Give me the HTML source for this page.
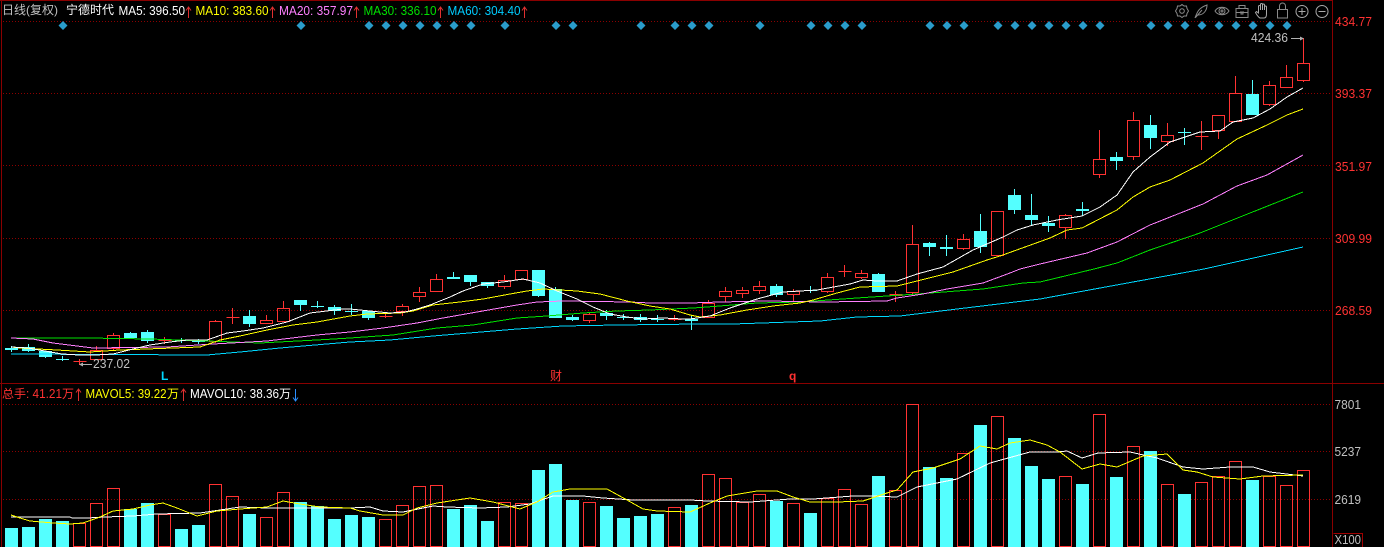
<!DOCTYPE html>
<html lang="zh">
<head>
<meta charset="utf-8">
<title>宁德时代</title>
<style>
html,body{margin:0;padding:0;background:#000;width:1384px;height:547px;overflow:hidden}
svg{display:block;position:absolute;left:0;top:0}
text{font-family:"Liberation Sans","Noto Sans CJK SC",sans-serif;font-size:12px}
text.n{font-size:13px}
.c polyline,.c path,.c line{shape-rendering:crispEdges;fill:none}
.g{stroke:#8c0000;stroke-width:1;stroke-dasharray:1 2}
</style>
</head>
<body>
<svg width="1384" height="547" viewBox="0 0 1384 547" xmlns="http://www.w3.org/2000/svg">
<rect width="1384" height="547" fill="#000"/>
<g class="c">
<path d="M0 .5H1332.5M1.5 0V547M1332.5 0V547M0 383.5H1384" stroke="#8a0000"/>
<path class="g" d="M3 21.5H1332M3 93.5H1332M3 165.5H1332M3 238.5H1332M3 310.5H1332M3 404.5H1332M3 451.5H1332M3 499.5H1332"/>
</g>

<!-- diamonds -->
<g fill="#2a9ccb">
<path d="M63 21l4.500 4.500-4.500 4.500-4.500-4.500zM301 21l4.500 4.500-4.500 4.500-4.500-4.500zM369 21l4.500 4.500-4.500 4.500-4.500-4.500zM386 21l4.500 4.500-4.500 4.500-4.500-4.500zM403 21l4.500 4.500-4.500 4.500-4.500-4.500zM420 21l4.500 4.500-4.500 4.500-4.500-4.500zM437 21l4.500 4.500-4.500 4.500-4.500-4.500zM454 21l4.500 4.500-4.500 4.500-4.500-4.500zM471 21l4.500 4.500-4.500 4.500-4.500-4.500zM505 21l4.500 4.500-4.500 4.500-4.500-4.500zM556 21l4.500 4.500-4.500 4.500-4.500-4.500zM573 21l4.500 4.500-4.500 4.500-4.500-4.500zM641 21l4.500 4.500-4.500 4.500-4.500-4.500zM675 21l4.500 4.500-4.500 4.500-4.500-4.500zM692 21l4.500 4.500-4.500 4.500-4.500-4.500zM709 21l4.500 4.500-4.500 4.500-4.500-4.500zM760 21l4.500 4.500-4.500 4.500-4.500-4.500zM811 21l4.500 4.500-4.500 4.500-4.500-4.500zM828 21l4.500 4.500-4.500 4.500-4.500-4.500zM845 21l4.500 4.500-4.500 4.500-4.500-4.500zM862 21l4.500 4.500-4.500 4.500-4.500-4.500zM930 21l4.500 4.500-4.500 4.500-4.500-4.500zM947 21l4.500 4.500-4.500 4.500-4.500-4.500zM964 21l4.500 4.500-4.500 4.500-4.500-4.500zM998 21l4.500 4.500-4.500 4.500-4.500-4.500zM1015 21l4.500 4.500-4.500 4.500-4.500-4.500zM1032 21l4.500 4.500-4.500 4.500-4.500-4.500zM1049 21l4.500 4.500-4.500 4.500-4.500-4.500zM1066 21l4.500 4.500-4.500 4.500-4.500-4.500zM1083 21l4.500 4.500-4.500 4.500-4.500-4.500zM1100 21l4.500 4.500-4.500 4.500-4.500-4.500zM1151 21l4.500 4.500-4.500 4.500-4.500-4.500zM1168 21l4.500 4.500-4.500 4.500-4.500-4.500zM1185 21l4.500 4.500-4.500 4.500-4.500-4.500zM1202 21l4.500 4.500-4.500 4.500-4.500-4.500zM1219 21l4.500 4.500-4.500 4.500-4.500-4.500zM1236 21l4.500 4.500-4.500 4.500-4.500-4.500zM1253 21l4.500 4.500-4.500 4.500-4.500-4.500zM1270 21l4.500 4.500-4.500 4.500-4.500-4.500zM1287 21l4.500 4.500-4.500 4.500-4.500-4.500z"/>
</g>

<g class="c">
<!-- red candles -->
<path stroke="#ff3232" d="M73.500 361.500h13M79.500 359v6
M90.500 350.500h12v9h-12zM96.500 346v4
M107.500 335.500h12v13h-12zM113.500 333v2M113.500 349v1
M158.500 340.500h13M164.500 337v7
M209.500 321.500h12v20h-12zM215.500 320v1M215.500 342v1
M226.500 317.500h13M232.500 308v16
M260.500 320.500h12v3h-12zM266.500 315v5
M277.500 308.500h12v13h-12zM283.500 301v7
M379.500 316.500h13M385.500 312v6
M396.500 306.500h12v5h-12zM402.500 304v2M402.500 312v4
M413.500 292.500h12v4h-12zM419.500 287v5M419.500 297v5
M430.500 279.500h12v12h-12zM436.500 274v5
M498.500 280.500h12v6h-12zM504.500 275v5M504.500 287v2
M515.500 270.500h12v9h-12z
M583.500 314.500h12v6h-12zM589.500 313v1M589.500 321v2
M668.500 319.500h13M674.500 315v6
M702.500 303.500h12v14h-12zM708.500 300v3
M719.500 291.500h12v5h-12zM725.500 287v4M725.500 297v5
M736.500 290.500h12v3h-12zM742.500 287v3M742.500 294v4
M753.500 286.500h12v4h-12zM759.500 281v5M759.500 291v3
M787.500 291.500h12v3h-12zM793.500 289v2M793.500 295v7
M821.500 277.500h12v14h-12zM827.500 273v4M827.500 292v1
M838.500 271.500h13M844.500 265v12
M855.500 273.500h12v4h-12zM861.500 270v3M861.500 278v1
M889.500 294.500h13M889.500 295.500h13M895.500 291v11
M906.500 244.500h12v48h-12zM912.500 225v19M912.500 293v1
M957.500 239.500h12v9h-12zM963.500 234v5M963.500 249v1
M991.500 211.500h12v44h-12z
M1059.500 215.500h12v12h-12zM1065.500 214v1M1065.500 228v11
M1093.500 159.500h12v15h-12zM1099.500 130v29M1099.500 175v3
M1127.500 120.500h12v36h-12zM1133.500 112v8M1133.500 157v3
M1161.500 135.500h12v6h-12zM1167.500 123v12M1167.500 142v4
M1195.500 136.500h13M1201.500 121v29
M1212.500 115.500h12v15h-12zM1218.500 131v8
M1229.500 93.500h12v28h-12zM1235.500 76v17
M1263.500 85.500h12v19h-12zM1269.500 81v4M1269.500 105v1
M1280.500 77.500h12v10h-12zM1286.500 65v12
M1297.500 63.500h12v17h-12zM1303.500 38v25M1303.500 81v1"/>
<!-- cyan wicks -->
<path stroke="#54ffff" d="M11.500 346v6M28.500 344v8M45.500 357v1M62.500 356v5M130.500 332v7M147.500 330v13M181.500 338v5M198.500 339v5M249.500 310v17M300.500 305v6M317.500 301v7M334.500 305v10M351.500 304v11M368.500 318v2M453.500 272v7M470.500 282v4M487.500 282v6M538.500 296v1M555.500 287v3M572.500 315v6M606.500 310v10M623.500 314v6M640.500 314v8M657.500 315v7M691.500 316v14M776.500 284v13M810.500 286v7M878.500 273v1M929.500 242v14M946.500 235v21M980.500 214v39M1014.500 189v25M1031.500 194v31M1048.500 216v16M1082.500 202v14M1116.500 152v18M1150.500 115v34M1184.500 128v17M1252.500 80v14"/>
<!-- cyan bodies -->
<path style="fill:#54ffff" d="M5 348h13v2h-13zM22 347h13v4h-13zM39 351h13v6h-13zM56 359h13v1h-13zM124 333h13v5h-13zM141 332h13v9h-13zM175 340h13v1h-13zM192 341h13v1h-13zM243 316h13v8h-13zM294 300h13v5h-13zM311 306h13v1h-13zM328 307h13v4h-13zM345 311h13v1h-13zM362 311h13v7h-13zM447 277h13v2h-13zM464 275h13v7h-13zM481 282h13v4h-13zM532 270h13v26h-13zM549 289h13v29h-13zM566 317h13v3h-13zM600 313h13v3h-13zM617 317h13v1h-13zM634 317h13v3h-13zM651 319h13v1h-13zM685 319h13v2h-13zM770 286h13v9h-13zM804 290h13v1h-13zM872 274h13v18h-13zM923 243h13v4h-13zM940 247h13v2h-13zM974 231h13v16h-13zM1008 195h13v15h-13zM1025 215h13v5h-13zM1042 223h13v3h-13zM1076 209h13v2h-13zM1110 157h13v4h-13zM1144 125h13v13h-13zM1178 132h13v1h-13zM1246 94h13v21h-13z"/>

<!-- moving averages -->
<polyline stroke="#00d8ff" points="11,354 207,355 240,352 280,348 350,342 390,340 433,336 517,329 563,326 617,325 700,324 733,324 820,321 857,317 900,316 957,309 1040,299 1204,269 1303,247"/>
<polyline stroke="#00e000" points="11,338 87,338 150,339 207,341 260,343 317,340 350,338 393,335 437,328 473,325 517,318 547,316 583,313 617,311 650,310 693,308 707,307 757,303 800,302 857,298 917,294 957,291 983,289 1023,283 1040,282 1094,269 1117,263 1150,250 1200,233 1250,213 1303,192"/>
<polyline stroke="#ff80ff" points="11,338 33,339 53,343 93,348 167,347 213,344 267,341 317,335 350,332 383,328 417,323 443,318 477,312 517,305 537,302 563,301 630,302 650,303 690,303 720,302 767,301 823,302 887,301 897,298 923,294 947,289 983,283 1010,273 1020,269 1040,264 1087,253 1117,242 1150,225 1203,204 1237,186 1267,175 1303,155"/>
<polyline stroke="#ffff00" points="11,347 20,348 57,350 90,352 120,350 173,348 200,347 220,340 240,336 267,330 293,325 317,322 350,316 367,314 400,313 413,311 433,305 460,302 483,299 510,294 527,291 543,289 577,291 600,294 627,301 650,306 670,309 690,315 700,317 720,315 747,310 773,306 800,303 813,300 837,293 860,287 897,286 917,281 953,272 987,260 1000,256 1050,238 1067,230 1082,228 1117,210 1133,197 1150,187 1170,180 1203,163 1237,139 1267,125 1287,115 1303,109"/>
<polyline stroke="#ffffff" points="11,347 28,348 45,351 62,354 79,355 96,355 113,354 133,349 150,345 170,342 187,340 207,340 227,333 243,331 263,328 287,322 310,313 343,309 350,309 370,311 390,313 405,312 417,309 430,305 450,297 463,291 483,284 503,282 523,279 540,283 557,291 577,299 593,307 610,314 627,317 643,319 663,318 683,319 690,319 710,316 730,308 757,299 783,292 817,290 850,284 863,280 877,281 897,281 917,274 943,267 973,250 1003,237 1017,230 1033,225 1057,220 1082,216 1100,207 1117,195 1133,172 1150,157 1170,142 1200,132 1220,131 1233,122 1253,118 1270,109 1287,97 1303,88"/>

<!-- volume cyan -->
<path style="fill:#54ffff" d="M5 528h13v19h-13zM22 527h13v20h-13zM39 519h13v28h-13zM56 521h13v26h-13zM124 509h13v38h-13zM141 503h13v44h-13zM175 529h13v18h-13zM192 525h13v22h-13zM243 514h13v33h-13zM294 502h13v45h-13zM311 506h13v41h-13zM328 519h13v28h-13zM345 515h13v32h-13zM362 517h13v30h-13zM447 509h13v38h-13zM464 505h13v42h-13zM481 521h13v26h-13zM532 470h13v77h-13zM549 464h13v83h-13zM566 500h13v47h-13zM600 506h13v41h-13zM617 518h13v29h-13zM634 516h13v31h-13zM651 514h13v33h-13zM685 505h13v42h-13zM770 501h13v46h-13zM804 513h13v34h-13zM872 476h13v71h-13zM923 467h13v80h-13zM940 478h13v69h-13zM974 425h13v122h-13zM1008 438h13v109h-13zM1025 466h13v81h-13zM1042 479h13v68h-13zM1076 484h13v63h-13zM1110 477h13v70h-13zM1144 451h13v96h-13zM1178 494h13v53h-13zM1246 480h13v67h-13z"/>
<!-- volume red -->
<path stroke="#ff3232" d="M73.500 523.500h12v23h-12zM90.500 503.500h12v43h-12zM107.500 488.500h12v58h-12zM158.500 514.500h12v32h-12zM209.500 484.500h12v62h-12zM226.500 496.500h12v50h-12zM260.500 517.500h12v29h-12zM277.500 492.500h12v54h-12zM379.500 519.500h12v27h-12zM396.500 505.500h12v41h-12zM413.500 486.500h12v60h-12zM430.500 485.500h12v61h-12zM498.500 502.500h12v44h-12zM515.500 503.500h12v43h-12zM583.500 502.500h12v44h-12zM668.500 507.500h12v39h-12zM702.500 474.500h12v72h-12zM719.500 478.500h12v68h-12zM736.500 502.500h12v44h-12zM753.500 494.500h12v52h-12zM787.500 503.500h12v43h-12zM821.500 498.500h12v48h-12zM838.500 489.500h12v57h-12zM855.500 504.500h12v42h-12zM889.500 490.500h12v56h-12zM906.500 404.500h12v142h-12zM957.500 453.500h12v93h-12zM991.500 416.500h12v130h-12zM1059.500 476.500h12v70h-12zM1093.500 414.500h12v132h-12zM1127.500 446.500h12v100h-12zM1161.500 484.500h12v62h-12zM1195.500 482.500h12v64h-12zM1212.500 476.500h12v70h-12zM1229.500 461.500h12v85h-12zM1263.500 476.500h12v70h-12zM1280.500 485.500h12v61h-12zM1297.500 470.500h12v76h-12z"/>
<polyline stroke="#ffffff" points="11,517 70,517 72,518 87,518 105,517 133,516 157,514 200,513 220,510 240,507 267,508 293,508 350,508 370,507 383,511 403,512 433,506 447,507 480,508 507,507 530,504 553,496 583,496 603,498 633,500 690,500 707,501 750,502 790,499 813,499 853,496 870,496 897,497 917,487 957,479 990,463 1030,452 1057,452 1067,451 1082,458 1098,453 1130,452 1157,458 1183,467 1203,469 1230,467 1253,467 1270,472 1303,476"/>
<polyline stroke="#ffff00" points="11,515 20,518 30,521 53,523 70,524 83,523 100,517 113,511 133,509 150,505 163,503 177,508 197,516 217,511 240,509 267,507 283,501 300,504 320,507 350,508 360,511 383,515 403,515 417,508 437,503 470,498 493,502 520,509 537,502 553,492 570,489 607,489 627,500 643,509 657,511 690,512 710,503 727,496 757,491 777,491 793,497 810,502 837,502 863,501 887,493 897,490 913,472 933,468 960,459 980,446 997,449 1010,443 1030,440 1047,445 1060,452 1082,469 1100,464 1117,467 1143,456 1167,454 1183,470 1197,472 1213,477 1240,479 1263,476 1303,475"/>
<!-- X100 box -->
<path d="M1333.500 533.500H1362.500V547" stroke="#a00000"/>
</g>

<!-- toolbar icons -->
<g fill="none" stroke="#8a8a8a" stroke-width="1">
<path d="M1182 4.500l2 1.500h2.500l.5 2.500 1.500 2.500-1.500 2.500-.5 2.500h-2.500l-2 1.500-2-1.500h-2.500l-.5-2.500-1.500-2.500 1.500-2.500.5-2.500h2.500z"/><circle cx="1182" cy="11" r="2.300"/>
<path d="M1195 18C1197 13 1198 8 1207 5C1207 10 1204 15 1198 15M1195.500 17.500L1202 10"/>
<path d="M1215 11C1218 6 1226 6 1229 11C1226 16 1218 16 1215 11Z"/><circle cx="1222" cy="11" r="3"/><circle cx="1222" cy="11" r="1"/>
<path d="M1236 8.500h12v9h-12zM1239 8.500V5.500h6v3M1236 12.500h12M1241 11v3h2v-3"/>
<path stroke="#a8a8a8" d="M1260 18C1258 17 1257 15 1255.500 12.500L1256.500 11.500L1258.500 13V6.500a1 1 0 0 1 2 0V10V4.500a1 1 0 0 1 2 0V10V5a1 1 0 0 1 2 0V10V7a1 1 0 0 1 2 0V14C1266.500 16 1266 18 1264 18Z"/>
<path d="M1277.500 9.500h10v8.500h-10zM1279.500 9.500V6a3 3 0 0 1 6 0v3.500"/>
<circle stroke="#a8a8a8" cx="1302" cy="11.500" r="6"/><path stroke="#a8a8a8" d="M1298.500 11.500h7M1302 8v7"/>
<circle stroke="#a8a8a8" cx="1322" cy="11.500" r="6"/><path stroke="#a8a8a8" d="M1318.500 11.500h7"/>
</g>

<!-- price pointers -->
<path d="M1291 38.500h10" stroke="#b0b0b0" fill="none"/><path d="M1300 36.500l4 2-4 2z" fill="#b0b0b0"/>
<path d="M82 364.500h10" stroke="#b0b0b0" fill="none"/><path d="M83 362.500l-4 2 4 2z" fill="#b0b0b0"/>

<!-- trend arrows -->
<g fill="none" stroke="#e03030" stroke-width="1">
<path d="M188.500 7v11M186 10.500l2.500-3.500 2.500 3.500"/>
<path d="M272.500 7v11M270 10.500l2.500-3.500 2.500 3.500"/>
<path d="M356.500 7v11M354 10.500l2.500-3.500 2.500 3.500"/>
<path d="M440.500 7v11M438 10.500l2.500-3.500 2.500 3.500"/>
<path d="M524.500 7v11M522 10.500l2.500-3.500 2.500 3.500"/>
<path d="M78.500 389v12M76 392.500l2.500-3.500 2.500 3.500"/>
<path d="M183.500 389v12M181 392.500l2.500-3.500 2.500 3.500"/>
<path stroke="#2a8fff" d="M295.500 389v12M293 397.500l2.500 3.500 2.500-3.500"/>
</g>

<!-- header text -->
<text x="2" y="14" fill="#c0c0c0">日线(复权)</text>
<text x="66" y="14" fill="#ffffff">宁德时代</text>
<text class="n" x="118.500" y="15" fill="#ffffff" textLength="66.500" lengthAdjust="spacingAndGlyphs">MA5: 396.50</text>
<text class="n" x="195.500" y="15" fill="#ffff00" textLength="73" lengthAdjust="spacingAndGlyphs">MA10: 383.60</text>
<text class="n" x="279" y="15" fill="#ff80ff" textLength="74" lengthAdjust="spacingAndGlyphs">MA20: 357.97</text>
<text class="n" x="363.500" y="15" fill="#00e000" textLength="73" lengthAdjust="spacingAndGlyphs">MA30: 336.10</text>
<text class="n" x="447.500" y="15" fill="#00ccff" textLength="73" lengthAdjust="spacingAndGlyphs">MA60: 304.40</text>

<!-- axis -->
<g fill="#ff3232">
<text class="n" x="1335" y="26" textLength="37" lengthAdjust="spacingAndGlyphs">434.77</text>
<text class="n" x="1335" y="98" textLength="37" lengthAdjust="spacingAndGlyphs">393.37</text>
<text class="n" x="1335" y="171" textLength="37" lengthAdjust="spacingAndGlyphs">351.97</text>
<text class="n" x="1335" y="243" textLength="37" lengthAdjust="spacingAndGlyphs">309.99</text>
<text class="n" x="1335" y="315" textLength="37" lengthAdjust="spacingAndGlyphs">268.59</text>
</g>
<g fill="#c0c0c0">
<text class="n" x="1334.500" y="409" textLength="26.500" lengthAdjust="spacingAndGlyphs">7801</text>
<text class="n" x="1334.500" y="456" textLength="26.500" lengthAdjust="spacingAndGlyphs">5237</text>
<text class="n" x="1334.500" y="504" textLength="26.500" lengthAdjust="spacingAndGlyphs">2619</text>
<text class="n" x="1334.500" y="544" textLength="26.500" lengthAdjust="spacingAndGlyphs">X100</text>
<text class="n" x="1251" y="42" textLength="37" lengthAdjust="spacingAndGlyphs">424.36</text>
<text class="n" x="93" y="368" textLength="37" lengthAdjust="spacingAndGlyphs">237.02</text>
</g>

<!-- markers -->
<text x="161" y="380" fill="#00d8ff" font-weight="bold">L</text>
<text x="550" y="380" fill="#ff3232">财</text>
<text x="789" y="380" fill="#ff3232" font-weight="bold">q</text>

<!-- volume legend -->
<text x="2" y="398" fill="#ff3232">总手</text>
<text class="n" x="26" y="398" fill="#ff3232" textLength="36" lengthAdjust="spacingAndGlyphs">: 41.21</text>
<text x="62" y="398" fill="#ff3232">万</text>
<text class="n" x="85.500" y="398" fill="#ffff00" textLength="81" lengthAdjust="spacingAndGlyphs">MAVOL5: 39.22</text>
<text x="167" y="398" fill="#ffff00">万</text>
<text class="n" x="190" y="398" fill="#ffffff" textLength="89" lengthAdjust="spacingAndGlyphs">MAVOL10: 38.36</text>
<text x="279" y="398" fill="#ffffff">万</text>
</svg>
</body>
</html>
